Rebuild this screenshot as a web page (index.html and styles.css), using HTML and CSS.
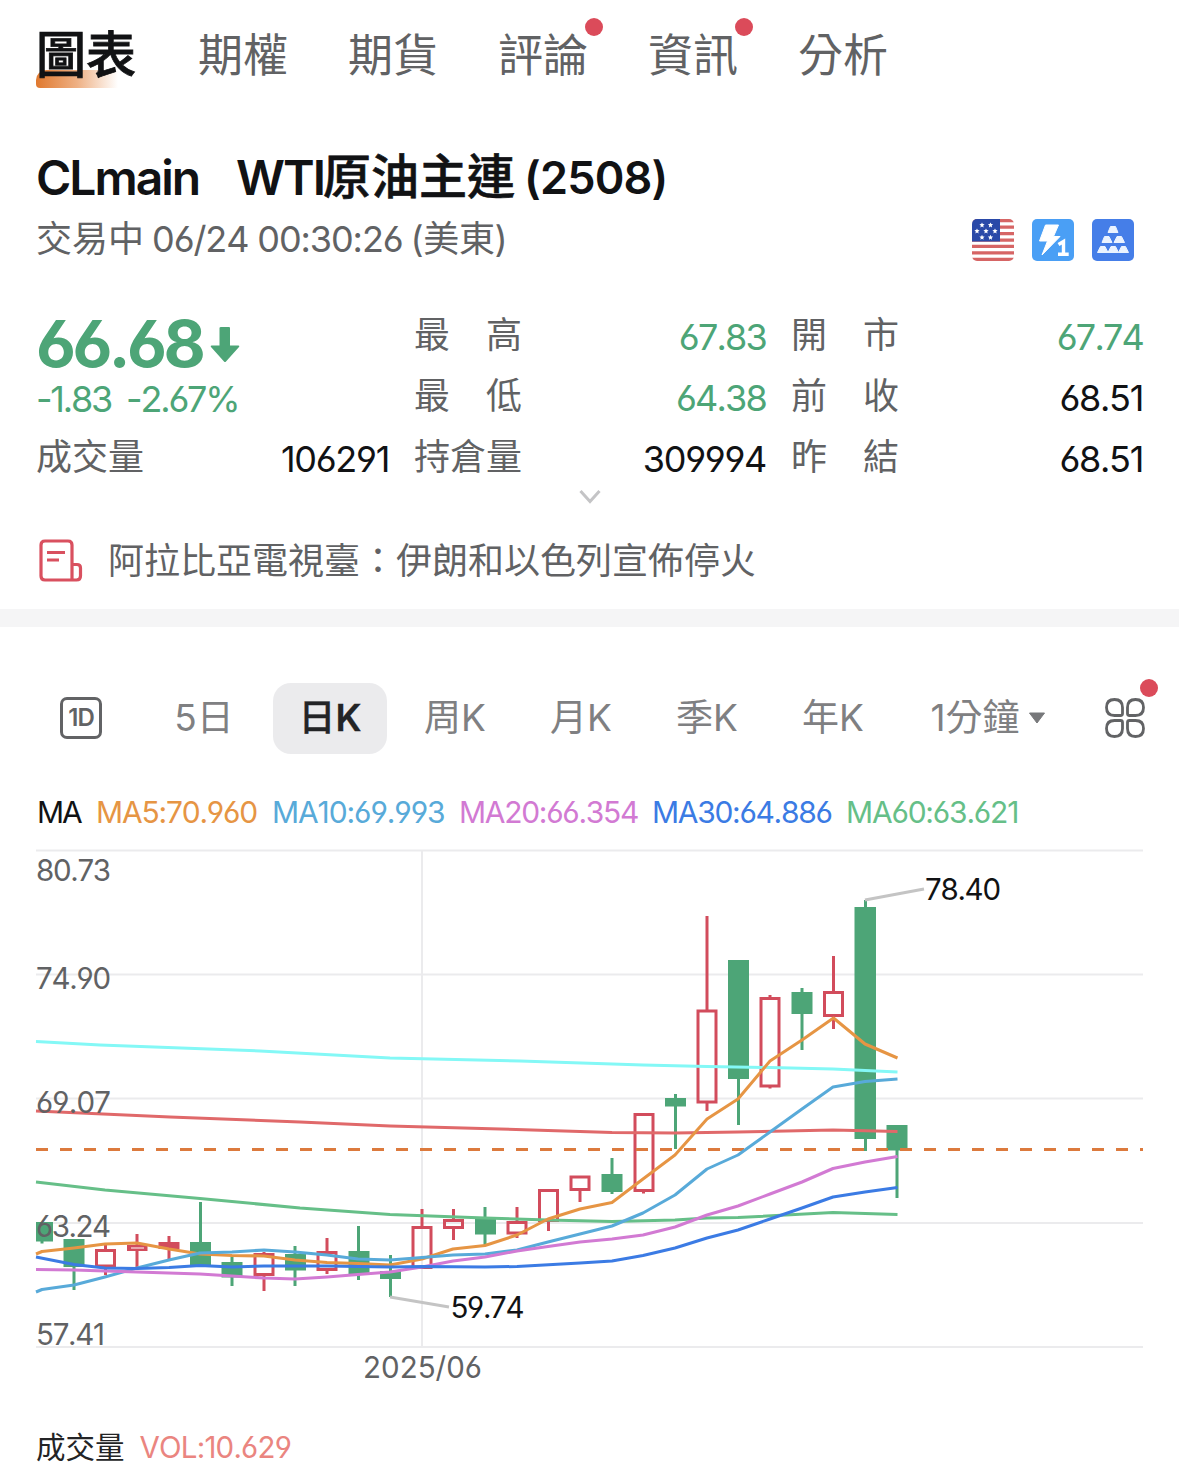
FILE: index.html
```html
<!DOCTYPE html>
<html lang="zh-Hant">
<head>
<meta charset="utf-8">
<title>CLmain WTI原油主連</title>
<link rel="stylesheet" href="styles.css">
</head>
<body>
<nav class="tabs">
  <span class="tab tab-active">圖表</span>
  <span class="tab">期權</span>
  <span class="tab">期貨</span>
  <span class="tab">評論<i class="dot"></i></span>
  <span class="tab">資訊<i class="dot"></i></span>
  <span class="tab">分析</span>
</nav>

<header class="head">
  <h1 class="title"><span class="code">CLmain</span><span class="name-latin">WTI</span><span class="name">原油主連</span><span class="month">(2508)</span></h1>
  <div class="status">
    <p class="session"><span>交易中</span><span class="time">06/24 00:30:26</span><span class="zone">(美東)</span></p>
    <div class="badges">
      <svg class="badge" viewBox="0 0 42 42">
        <defs>
          <clipPath id="flag"><rect width="42" height="42" rx="5"/></clipPath>
          <path id="star" d="M0-2.6 .8-.9 2.6-.7 1.2.6 1.6 2.4 0 1.5-1.6 2.4-1.2.6-2.6-.7-.8-.9Z"/>
        </defs>
        <g clip-path="url(#flag)">
          <rect width="42" height="42" fill="#fff"/>
          <path stroke="#d66565" stroke-width="3.2" d="M0 1.6H42M0 8.1H42M0 14.6H42M0 21.1H42M0 27.4H42M0 33.9H42M0 40.4H42"/>
          <rect width="28" height="22.5" fill="#2a49a8"/>
          <g fill="#fff"><use href="#star" x="10" y="6"/><use href="#star" x="18.5" y="6"/><use href="#star" x="5" y="12"/><use href="#star" x="14" y="12"/><use href="#star" x="23" y="12"/><use href="#star" x="10" y="18.3"/><use href="#star" x="18.5" y="18.3"/></g>
        </g>
      </svg>
      <svg class="badge" viewBox="0 0 42 42">
        <rect width="42" height="42" rx="5" fill="#4a9ff5"/>
        <path d="M13.5 6H26.500L21.5 17.500H28L10 36 15.500 22H7.500Z" fill="#fff" stroke="#fff" stroke-linejoin="round"/>
        <path d="M26.500 25.500 31.500 22.500V35.200M26 35.200H36.700" fill="none" stroke="#fff" stroke-width="3.400"/>
      </svg>
      <svg class="badge" viewBox="0 0 42 42">
        <rect width="42" height="42" rx="5" fill="#457ee8"/>
        <path fill="#eaf3ff" stroke="#eaf3ff" stroke-linejoin="round" d="M18.500 7.500H23.500L26 13.500H16ZM12.500 17.500H17L20 23.500H10ZM25 17.500H29.500L32.500 23.500H22ZM8.500 27.500H13L16 33.500H5.500ZM19 27.500H23.500L26.500 33.500H16ZM29.500 27.500H33.500L36.500 33.500H26.500Z"/>
      </svg>
    </div>
  </div>
</header>

<section class="quote">
  <div class="last">
    <div class="price">66.68<svg class="arrow" viewBox="0 0 30 36"><path d="M11 0H19Q20 0 20 1V18.500H28.500Q30 18.500 29 20L16 34.500Q15 35.500 14 34.500L1 20Q0 18.500 1.500 18.500H9.500V1Q9.500 0 11 0Z" fill="#4da577"/></svg></div>
    <div class="change"><span>-1.83</span><span>-2.67%</span></div>
  </div>
  <dl class="cell c2"><dt>最<b></b>高</dt><dd class="down">67.83</dd></dl>
  <dl class="cell c3"><dt>開<b></b>市</dt><dd class="down">67.74</dd></dl>
  <dl class="cell c2"><dt>最<b></b>低</dt><dd class="down">64.38</dd></dl>
  <dl class="cell c3"><dt>前<b></b>收</dt><dd>68.51</dd></dl>
  <dl class="cell c1"><dt>成交量</dt><dd>106291</dd></dl>
  <dl class="cell c2"><dt>持倉量</dt><dd>309994</dd></dl>
  <dl class="cell c3"><dt>昨<b></b>結</dt><dd>68.51</dd></dl>
</section>
<div class="expand"><svg width="24" height="16" viewBox="0 0 24 16"><path d="M2.500 2 12 12.500 21.500 2" fill="none" stroke="#c4c4c6" stroke-width="3"/></svg></div>

<div class="news">
  <svg class="news-icon" viewBox="0 0 44 44" fill="none" stroke="#d9505f" stroke-width="3.200">
    <path d="M33 41H6Q2 41 2 37V6Q2 2 6 2H29Q33 2 33 6V41ZM33 25.500H38Q41.500 25.500 41.500 29V37Q41.500 41 37.500 41H33"/>
    <path d="M8 13.500H26M8 21H20"/>
  </svg>
  <span>阿拉比亞電視臺：伊朗和以色列宣佈停火</span>
</div>

<nav class="periods">
  <span class="oned">1D</span>
  <span class="period p-five"><em>5</em>日</span>
  <span class="period active">日<em>K</em></span>
  <span class="period">周<em>K</em></span>
  <span class="period">月<em>K</em></span>
  <span class="period">季<em>K</em></span>
  <span class="period">年<em>K</em></span>
  <span class="period p-min"><em>1</em>分鐘<svg width="18" height="12" viewBox="0 0 18 12"><path d="M1.500 1H16.500L9 11Z" fill="#77787a" stroke="#77787a" stroke-linejoin="round"/></svg></span>
  <span class="more"><svg width="40" height="40" viewBox="0 0 40 40" fill="none" stroke="#626365" stroke-width="2.800"><path d="M9.500 1.500Q17.500 1.500 17.500 9.500V15.500Q17.500 17.500 15.500 17.500H9.500Q1.500 17.500 1.500 9.500T9.500 1.500ZM30.500 1.500Q38.500 1.500 38.500 9.500T30.500 17.500H24.500Q22.500 17.500 22.500 15.500V9.500Q22.500 1.500 30.500 1.500ZM9.500 22.500H15.500Q17.500 22.500 17.500 24.500V30.500Q17.500 38.500 9.500 38.500T1.500 30.500T9.500 22.500ZM30.500 22.500Q38.500 22.500 38.500 30.500T30.500 38.500T22.500 30.500V24.500Q22.500 22.500 24.500 22.500Z"/></svg><i class="dot"></i></span>
</nav>

<div class="legend">
  <span class="ma">MA</span><span class="ma5">MA5:70.960</span><span class="ma10">MA10:69.993</span><span class="ma20">MA20:66.354</span><span class="ma30">MA30:64.886</span><span class="ma60">MA60:63.621</span>
</div>

<svg class="chart" viewBox="0 840 1179 560">
  <path class="grid" d="M36 850.500H1143M36 974.500H1143M36 1098.500H1143M36 1223H1143M36 1347H1143M422 850V1347"/>
  <path class="up wick" d="M105.500 1245V1250M105.500 1267V1275M137 1234V1270M169 1236V1260M264 1252V1254M264 1276V1291M327 1238V1252M327 1270V1274M422 1209V1227M453.500 1209V1220M453.500 1228V1240M517 1207V1222M517 1234V1238M548.500 1221V1231M580 1190V1202M643.500 1191V1193.500M707 916V1010M707 1103V1111M770 995V998M770 1087V1088.500M833.500 956V992M833.500 1016V1029"/>
  <path class="up box" d="M96.500 1250.500H114.500V1266H96.500ZM255 1254.500H273V1274.500H255ZM318 1252.500H336V1269.500H318ZM413 1227.500H431V1267.500H413ZM444.500 1220.500H462.500V1227.500H444.500ZM508 1222.500H526V1233H508ZM539.500 1190.500H557.500V1220.500H539.500ZM571 1177H589V1189.500H571ZM635 1114.500H653V1190.500H635ZM698 1011H716V1102H698ZM761 998.500H779V1086H761ZM824.500 992.500H842.500V1015.500H824.500Z"/>
  <path class="upfill" d="M127 1245H147.500V1251H127ZM158.500 1242H179.500V1249H158.500Z"/>
  <path class="white" d="M131 1247.500H144V1248.500H131Z"/>
  <path class="down-wick" d="M42 1240V1243.500M74 1260V1290M200.500 1202V1250M232 1257V1286M295 1246V1286M358.500 1226V1280M390.500 1255V1297M485 1207V1245M612 1158V1194M675.500 1094V1149M738.500 1070V1125M802 988V1050M865.500 900V1151M897 1125V1198"/>
  <path class="down-body" d="M36 1222H53V1241.500H36ZM63.500 1239H84.500V1267H63.500ZM190 1242H211V1265.500H190ZM221.500 1262H242.500V1277.500H221.500ZM285 1254H306V1270.500H285ZM348.500 1251H369.500V1274.500H348.500ZM380 1271H401V1279H380ZM475 1219H496V1234.500H475ZM601.500 1174H622.500V1192H601.500ZM665 1098H686V1106.500H665ZM728 960H749V1079H728ZM791.500 992H812.500V1014H791.500ZM854.500 907H876V1139H854.500ZM886.500 1125H907.500V1150.500H886.500Z"/>
  <path class="now" d="M36 1149.500H1143"/>
  <g class="lines">
    <path stroke="#84f8f6" d="M36 1041.500 100 1045 260 1051 390 1058 520 1061 643 1065 707 1066.500 770 1067.500 833 1069 897.500 1072"/>
    <path stroke="#e0696a" d="M36 1111 170 1117 300 1122 390 1126 500 1129 612 1132.500 675 1133 738 1132 833 1130 897.500 1131.500"/>
    <path stroke="#66bf88" d="M36 1182 105 1190 200 1198.500 300 1208 390 1214.500 485 1218 548 1220 612 1221.500 675 1220 707 1218 738 1217.500 833 1212.500 897.500 1214.500"/>
    <path stroke="#e69544" d="M36 1254 42 1251.500 74 1248 105 1244 137 1243 169 1249 200 1254 232 1255.500 264 1256 295 1260 327 1262.500 358 1263.500 390 1265 422 1259 453 1249 485 1245.500 517 1235 548 1219 580 1209 612 1202.500 643 1179 675 1155 707 1119 738 1099 770 1061 802 1040 833.500 1018 865 1044 897.500 1058"/>
    <path stroke="#58aad9" d="M36 1292 42 1289.500 74 1285 105 1277 137 1268 169 1260 200 1253 232 1252 264 1250 295 1252 327 1255 358 1259 390 1260 422 1257.500 453 1255 485 1254 517 1250 548 1242 580 1234 612 1226 643 1213 675 1195 707 1169 738 1155 770 1132 802 1109 833 1087 865 1081.500 897.500 1079"/>
    <path stroke="#d27ad3" d="M36 1269.500 74 1270 137 1272 200 1274 264 1278 295 1279 327 1277 358 1274.500 390 1272 422 1267 453 1261 485 1257 517 1251 548 1246.500 580 1242 612 1239 643 1235 675 1227 707 1215 738 1206 770 1194 802 1182 833 1168.500 865 1162 897.500 1156.500"/>
    <path stroke="#3b7be4" d="M36 1257 74 1264.500 105 1268 137 1268.500 169 1267.500 200 1265.500 232 1267 264 1266 327 1266 390 1267 422 1266.500 485 1267 517 1266.500 580 1263 612 1261 643 1255.500 675 1248 707 1238 738 1230 770 1219 802 1208 833 1197 865 1192 897.500 1187.500"/>
  </g>
  <path class="leader" d="M865 900 924 889M390 1297 449 1307"/>
  <g class="axis">
    <text x="36" y="880.500" textLength="75">80.73</text>
    <text x="36" y="988.500" textLength="75">74.90</text>
    <text x="36" y="1112.500" textLength="75">69.07</text>
    <text x="36" y="1236.500" textLength="75">63.24</text>
    <text x="36" y="1344.500" textLength="69">57.41</text>
    <text x="363" y="1377.500" textLength="119">2025/06</text>
    <text class="mark" x="925" y="899.500" textLength="76">78.40</text>
    <text class="mark" x="450.500" y="1318" textLength="74">59.74</text>
  </g>
</svg>

<div class="volume"><span class="vol-name">成交量</span><span class="vol">VOL:10.629</span></div>
</body>
</html>
```

FILE: styles.css
```css
* { box-sizing: border-box; }
body {
  margin: 0;
  width: 1179px;
  height: 1474px;
  overflow: hidden;
  background: #fff;
  color: #616264;
  font-family: Inter, "Noto Sans CJK TC", sans-serif;
  font-feature-settings: "cv03", "cv04";
  font-kerning: none;
}
h1, p, dl, dd { margin: 0; }
.tabs {
  display: flex;
  align-items: center;
  height: 108px;
  padding: 4px 0 0 36px;
  gap: 60px;
}
.tab { position: relative; font-size: 45px; line-height: 60px; }
.tab-active { font-size: 50px; line-height: 58px; padding-bottom: 2px; font-weight: 500; -webkit-text-stroke: .8px #111214; color: #111214; width: 102px; }
.tab-active::before {
  content: "";
  position: absolute;
  z-index: -1;
  left: 0;
  bottom: -2px;
  width: 82px;
  height: 18px;
  border-radius: 10px 0 0 4px;
  background: linear-gradient(90deg, #e0792f, #eeb084 50%, #fff);
}
.dot { position: absolute; width: 18px; height: 18px; border-radius: 50%; background: #db4b5a; }
.tab .dot { right: -15px; top: -8px; }

.head { height: 191px; padding: 39px 45px 0 36px; }
.title {
  display: flex;
  align-items: center;
  height: 62px;
  font-size: 48px;
  line-height: 58px;
  font-weight: 600;
  color: #111214;
}
.code { width: 200px; letter-spacing: -2px; }
.name-latin { letter-spacing: -2px; }
.name { font-weight: 500; padding-bottom: 2px; margin-left: -1px; -webkit-text-stroke: .6px #111214; }
.month { margin-left: 9px; font-size: 45px; letter-spacing: -.8px; }
.status { display: flex; align-items: center; justify-content: space-between; height: 62px; }
.session { display: flex; align-items: center; height: 42px; padding-bottom: 2px; font-size: 36px; line-height: 42px; }
.time { margin-left: 8px; letter-spacing: -1.100px; }
.zone { margin-left: 8px; letter-spacing: -.4px; }
.badges { display: flex; gap: 18px; }
.badge { width: 42px; height: 42px; }

.quote {
  display: grid;
  grid-template-columns: 353px 352px 352px;
  grid-template-rows: 61px 61px 61px;
  column-gap: 25px;
  padding: 7px 0 0 36px;
  height: 184px;
  font-size: 36px;
}
.last { grid-row: 1 / 3; grid-column: 1; color: #4da577; }
.price { display: flex; align-items: center; height: 70px; font-size: 65px; line-height: 56px; font-weight: 700; letter-spacing: -3.500px; padding-top: 6px; }
.arrow { width: 30px; height: 36px; margin: 2px 0 0 8px; }
.change { display: flex; gap: 15px; height: 46px; padding-top: 5px; line-height: 36px; letter-spacing: -2.200px; }
.cell { display: flex; justify-content: space-between; align-items: center; }
.c1 { grid-column: 1; }
.c2 { grid-column: 2; }
.c3 { grid-column: 3; }
dt { display: flex; line-height: 54px; padding-bottom: 3px; }
dt b { width: 36px; }
dd { color: #111214; letter-spacing: -1.300px; }
dd.down { color: #4da577; letter-spacing: -1.800px; }
.expand { display: flex; justify-content: center; height: 36px; padding-top: 6px; }
.news {
  display: flex;
  align-items: center;
  gap: 25px;
  height: 108px;
  padding: 0 0 12px 39px;
  border-bottom: 18px solid #f5f5f6;
  font-size: 36px;
}
.news-icon { width: 44px; height: 44px; margin-top: 6px; }

.periods {
  display: flex;
  align-items: center;
  height: 72px;
  margin-top: 55px;
  padding-left: 60px;
  font-size: 37px;
  color: #7f8082;
}
.periods em { font-style: normal; }
.oned {
  width: 42px;
  height: 42px;
  border: 3px solid #626365;
  border-radius: 7px;
  text-align: center;
  font-size: 24px;
  line-height: 36px;
  font-weight: 600;
  letter-spacing: -1px;
  color: #626365;
}
.period { display: flex; align-items: center; justify-content: center; width: 126px; line-height: 54px; }
.p-five { width: 114px; margin: 0 12px 0 45px; }
.period.active { width: 114px; height: 71px; margin-right: 5px; border-radius: 18px; background: #ebebed; color: #232426; font-weight: 500; -webkit-text-stroke: .3px #232426; }
.active em { font-weight: 600; }
.p-min { width: 180px; margin-left: 2px; }
.p-min svg { margin-left: 8px; }
.more { display: flex; position: relative; width: 40px; height: 40px; margin-left: auto; margin-right: 34px; }
.more .dot { right: -13px; top: -19px; }

.legend { display: flex; height: 84px; margin-top: 16px; align-items: center; padding-left: 37px; font-size: 30px; letter-spacing: -1.300px; }
.ma { width: 59px; color: #111214; letter-spacing: -2px; }
.ma5 { width: 176px; color: #e69544; letter-spacing: -1.200px; }
.ma10 { width: 187px; color: #58aad9; letter-spacing: -1.100px; }
.ma20 { width: 193px; color: #d27ad3; }
.ma30 { width: 194px; color: #3b7be4; }
.ma60 { color: #66bf88; letter-spacing: -1.200px; }

.chart { display: block; width: 1179px; height: 560px; margin-top: -14px; }
.grid { stroke: #ebebed; stroke-width: 2; fill: none; }
.wick { stroke-width: 3; }
.up { stroke: #d24c5c; fill: none; }
.box { stroke-width: 3; }
.upfill { fill: #d24c5c; }
.white { fill: #fff; }
.down-wick { stroke: #4da577; stroke-width: 3; }
.down-body { fill: #4da577; }
.now { stroke: #dc7a3d; stroke-width: 3; stroke-dasharray: 12 12; }
.lines { fill: none; stroke-width: 3; stroke-linejoin: round; }
.leader { stroke: #c4c4c4; stroke-width: 3; fill: none; }
.axis { font-size: 29.500px; fill: #616264; }
.mark { fill: #111214; }

.volume { display: flex; align-items: center; gap: 15px; height: 74px; padding: 20px 0 0 36px; font-size: 29.500px; color: #232426; }
.vol-name { padding-bottom: 4px; }
.vol { color: #ea8580; letter-spacing: -.8px; }
```
